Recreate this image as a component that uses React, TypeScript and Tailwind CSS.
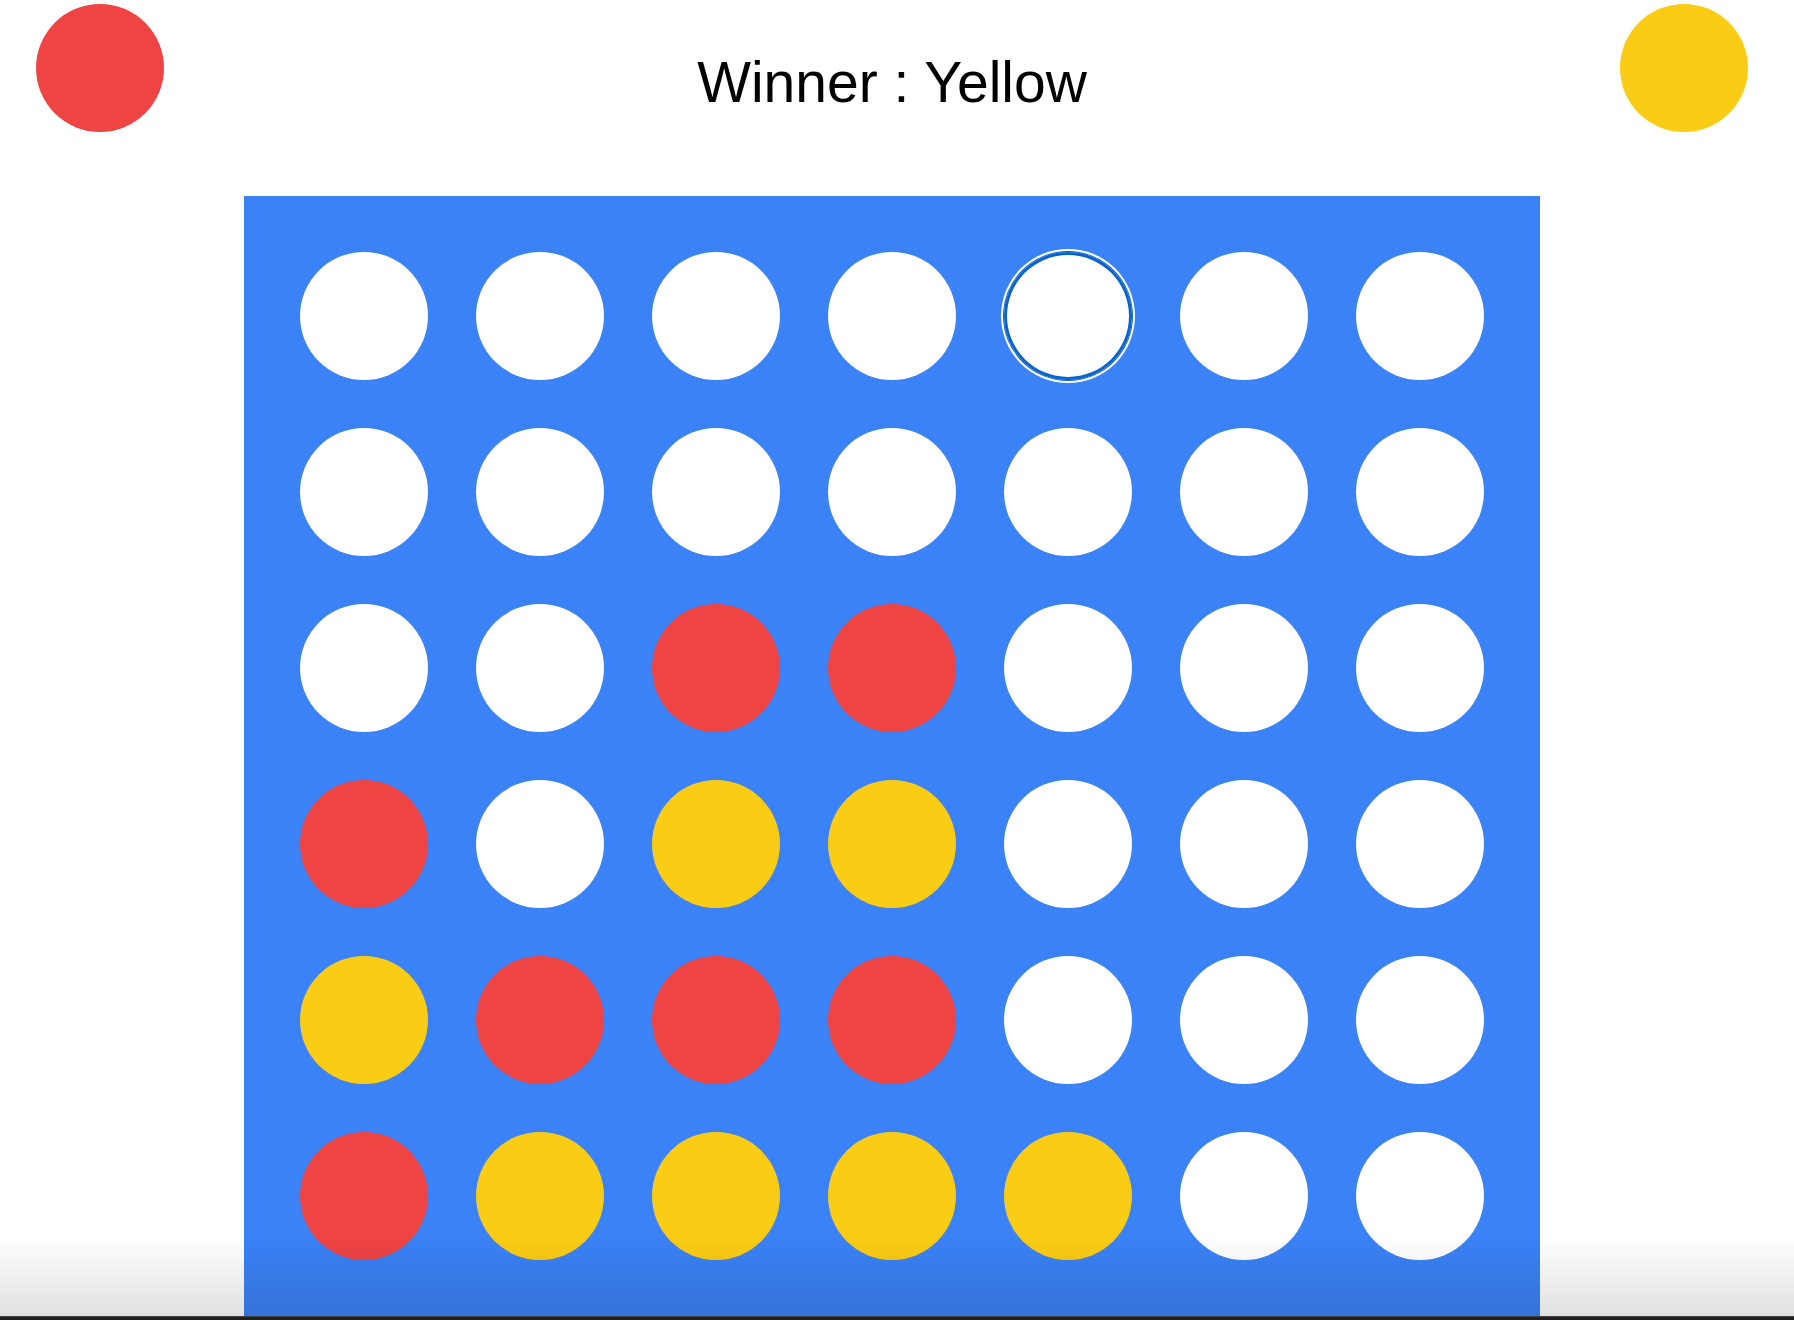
import { useState } from "react";

type Cell = "R" | "Y" | null;

const initialBoard: Cell[][] = [
  [null, null, null, null, null, null, null],
  [null, null, null, null, null, null, null],
  [null, null, "R", "R", null, null, null],
  ["R", null, "Y", "Y", null, null, null],
  ["Y", "R", "R", "R", null, null, null],
  ["R", "Y", "Y", "Y", "Y", null, null],
];

const cellColor = (cell: Cell) => {
  if (cell === "R") return "bg-[#ef4444]";
  if (cell === "Y") return "bg-[#facc15]";
  return "bg-white";
};

const App = () => {
  const [board] = useState<Cell[][]>(initialBoard);
  const [focused] = useState({ row: 0, col: 4 });

  return (
    <div className="relative min-h-[1320px] bg-white" style={{ fontFamily: '"Liberation Sans", Arial, sans-serif' }}>
      <div className="w-[1784px]">
        <header className="flex justify-between items-start px-[36px] pt-[4px]">
          <div className="w-32 h-32 rounded-full bg-[#ef4444]" />
          <h1 className="mt-[50px] text-[57px] leading-none text-black">Winner : Yellow</h1>
          <div className="w-32 h-32 rounded-full bg-[#facc15]" />
        </header>

        <div className="mt-[64px] mx-auto w-[1296px] bg-[#3b82f6] p-[56px]">
          <div className="grid grid-cols-7 gap-[48px]">
            {board.map((row, r) =>
              row.map((cell, c) => {
                const isFocused = focused.row === r && focused.col === c;
                return (
                  <div
                    key={`${r}-${c}`}
                    className={`w-32 h-32 rounded-full ${cellColor(cell)} ${
                      isFocused ? "shadow-[inset_0_0_0_3px_#0b63ce,0_0_0_1px_#0b63ce,0_0_0_3px_#ffffff]" : ""
                    }`}
                  />
                );
              })
            )}
          </div>
        </div>
      </div>

      {/* bottom fade + window edge */}
      <div className="pointer-events-none fixed left-0 right-0 bottom-[4px] h-[80px] bg-gradient-to-b from-transparent to-black/[0.12]" />
      <div className="fixed left-0 right-0 bottom-0 h-[4px] bg-[#1f1f1f] border-t border-[#444]" />
    </div>
  );
};

export default App;
